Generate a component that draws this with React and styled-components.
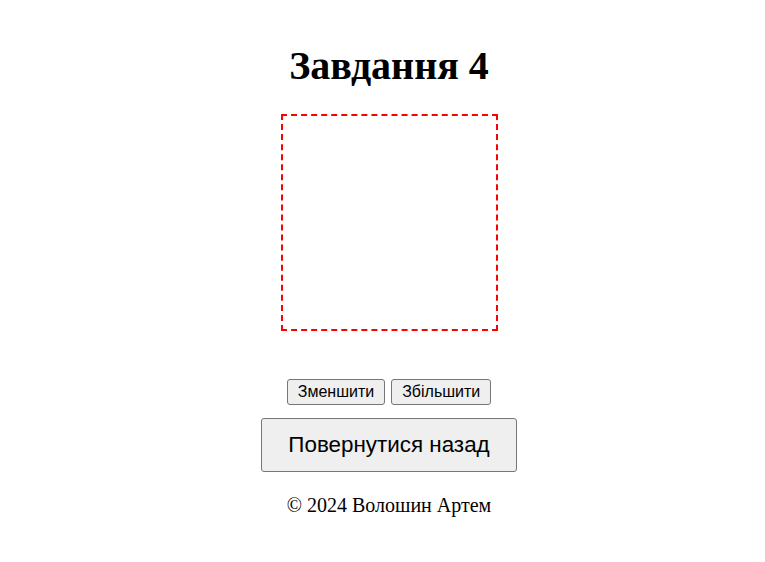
import React, { useState } from 'react';
import styled, { createGlobalStyle } from 'styled-components';

const GlobalStyle = createGlobalStyle`
    body {
        margin: 0;
        background: #fff;
        font-family: 'Liberation Serif', 'Times New Roman', serif;
        color: #000;
    }
`

const Page = styled.div`
    display: flex;
    flex-direction: column;
    align-items: center;
    padding: 43px 0 0 13px;
`

const Title = styled.h1`
    font-family: 'Liberation Serif', serif;
    font-size: 40px;
    font-weight: bold;
    line-height: 46px;
    margin: 0 0 25px;
`

const Square = styled.div`
    box-sizing: border-box;
    width: ${p => p.size}px;
    height: ${p => p.size}px;
    border: 2px dashed red;
`

const Controls = styled.div`
    display: flex;
    gap: 6px;
    margin-top: 48px;
`

const Button = styled.button`
    font-family: 'Liberation Sans', Arial, sans-serif;
    font-size: ${p => (p.big ? '22.4px' : '16px')};
    padding: ${p => (p.big ? '13px 26px' : '3px 10px')};
    background: #efefef;
    color: #000;
    border: 1px solid #767676;
    border-radius: 3px;
    cursor: pointer;
`

const BackButton = styled(Button)`
    margin-top: 13px;
`

const Footer = styled.footer`
    margin-top: 22px;
    font-size: 20px;
`

export default function App() {
    const [size, setSize] = useState(217);
    return <>
        <GlobalStyle />
        <Page>
            <Title>Завдання 4</Title>
            <Square size={size} />
            <Controls>
                <Button onClick={() => setSize(s => Math.max(20, s - 20))}>Зменшити</Button>
                <Button onClick={() => setSize(s => s + 20)}>Збільшити</Button>
            </Controls>
            <BackButton big>Повернутися назад</BackButton>
            <Footer>© 2024 Волошин Артем</Footer>
        </Page>
    </>
}
